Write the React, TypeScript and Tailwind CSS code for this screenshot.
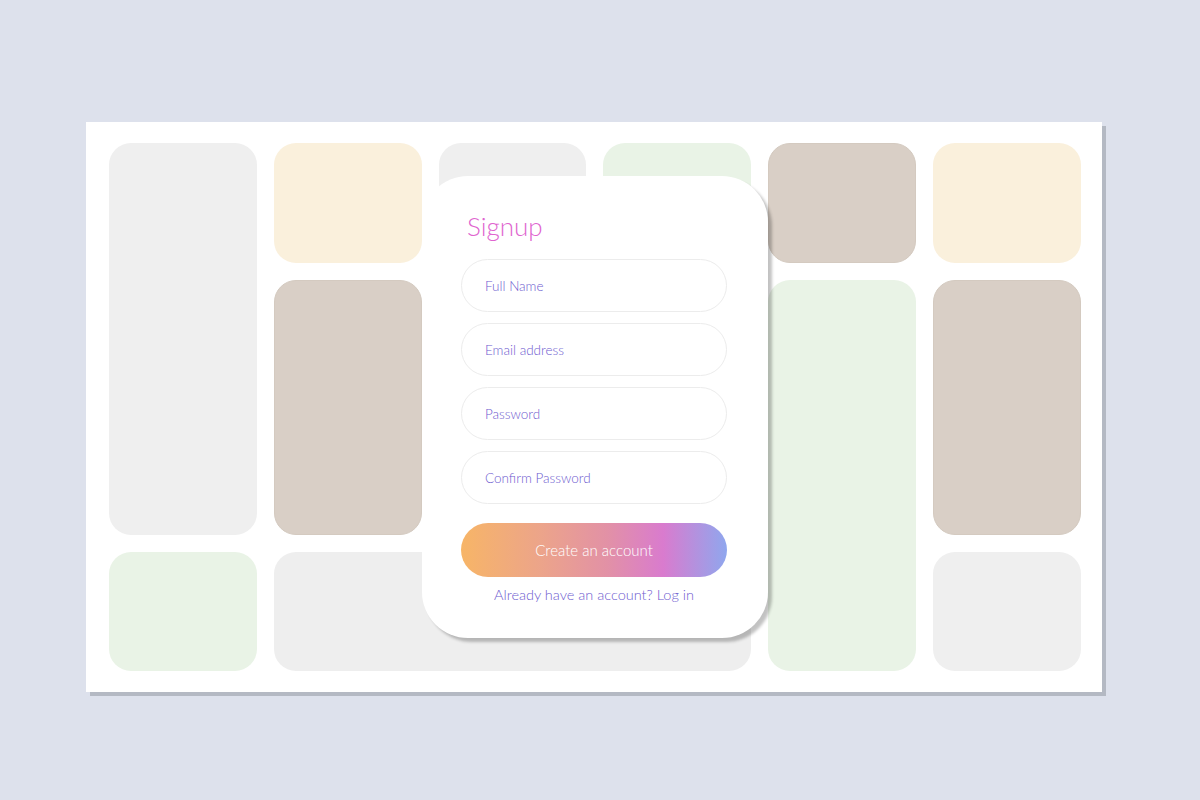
import React from "react";

const font = { fontFamily: "Lato, 'Noto Sans', sans-serif" };

function Tile({ className }: { className: string }) {
  return <div className={`rounded-[22px] ${className}`} />;
}

function Field({ placeholder, type = "text" }: { placeholder: string; type?: string }) {
  return (
    <input
      type={type}
      placeholder={placeholder}
      className="h-[53px] w-full rounded-full border border-[#ececec] bg-white px-[23px] text-[13.5px] font-light text-[#6e5bcf] outline-none placeholder:text-[#6e5bcf]"
    />
  );
}

export default function App() {
  return (
    <div className="min-h-[800px] w-[1200px] bg-[#dde1ec] pt-[122px] pl-[86px]" style={font}>
      <div className="relative w-[1016px] bg-white shadow-[4px_4px_0_#b4b9c3]">
        {/* background tiles */}
        <div className="grid grid-cols-6 grid-rows-[120px_255px_119px] gap-x-[17px] gap-y-[17px] pt-[21px] pb-[21px] pl-[23px] pr-[21px]">
          <Tile className="col-start-1 row-start-1 row-span-2 bg-[#efefef]" />
          <Tile className="col-start-1 row-start-3 bg-[#e9f3e6]" />
          <Tile className="col-start-2 row-start-1 bg-[#faf0dc]" />
          <Tile className="col-start-2 row-start-2 bg-[#d9cfc6] border border-[#d4cac0]" />
          <Tile className="col-start-2 col-span-3 row-start-3 bg-[#eeeeee]" />
          <Tile className="col-start-3 row-start-1 row-span-2 bg-[#efefef]" />
          <Tile className="col-start-4 row-start-1 row-span-2 bg-[#e9f3e6]" />
          <Tile className="col-start-5 row-start-1 bg-[#d9cfc6] border border-[#d4cac0]" />
          <Tile className="col-start-5 row-start-2 row-span-2 bg-[#e9f3e6]" />
          <Tile className="col-start-6 row-start-1 bg-[#faf0dc]" />
          <Tile className="col-start-6 row-start-2 bg-[#d9cfc6] border border-[#d4cac0]" />
          <Tile className="col-start-6 row-start-3 bg-[#efefef]" />
        </div>

        {/* signup card */}
        <div className="absolute left-[336px] top-[54px] flex h-[462px] w-[346px] flex-col rounded-[46px] bg-white pt-[35px] pl-[39px] pr-[41px] shadow-[4px_4px_3px_rgba(0,0,0,0.24)]">
          <h1 className="pl-[6px] text-[26px] leading-[30px] font-light text-[#e065cf]">Signup</h1>
          <div className="mt-[18px] flex flex-col gap-[11px]">
            <Field placeholder="Full Name" />
            <Field placeholder="Email address" type="email" />
            <Field placeholder="Password" type="password" />
            <Field placeholder="Confirm Password" type="password" />
          </div>
          <button className="mt-[19px] h-[54px] w-full rounded-full bg-[linear-gradient(90deg,#f7b567_0%,#eca48a_30%,#e291a6_55%,#d97bce_76%,#8fa7ee_100%)] text-[15px] font-light text-white">
            Create an account
          </button>
          <p className="mt-[8px] text-center text-[14.5px] leading-[20px] font-light text-[#6e5bcf]">
            Already have an account? Log in
          </p>
        </div>
      </div>
    </div>
  );
}
